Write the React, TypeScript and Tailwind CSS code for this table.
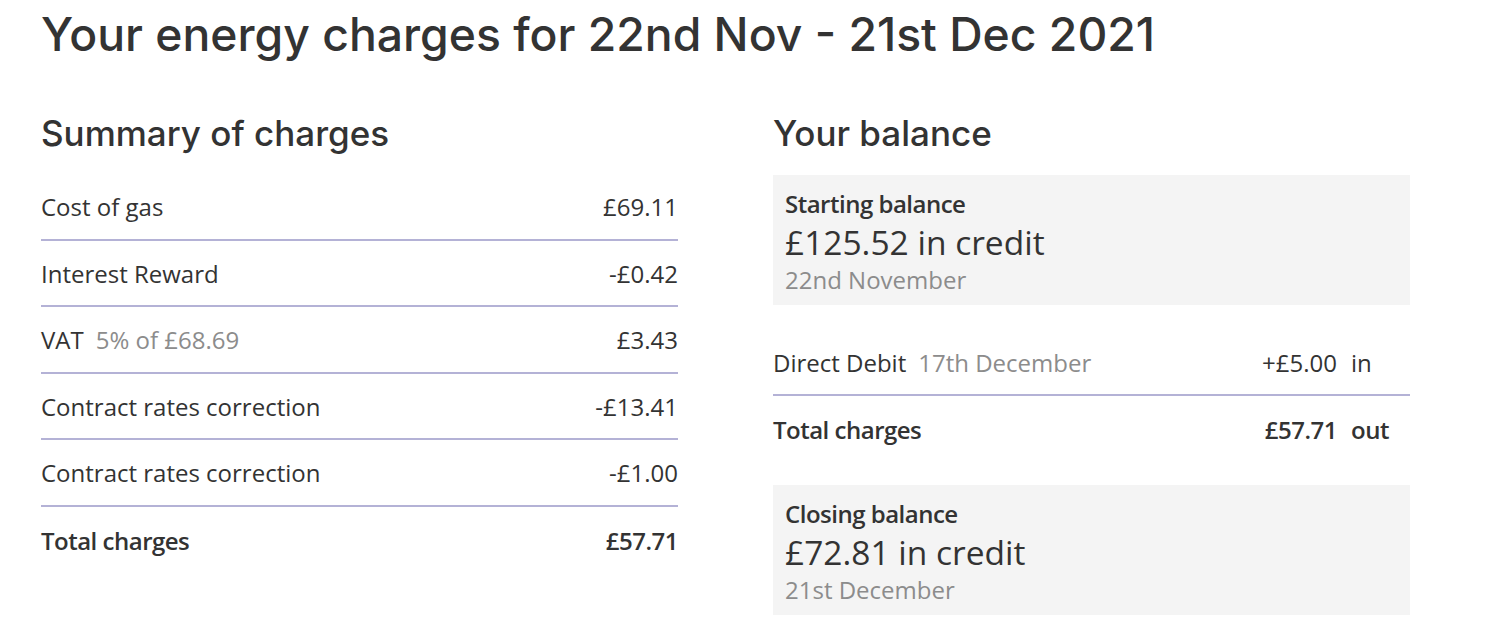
const heading = { fontFamily: 'Inter, "Noto Sans", sans-serif' };

interface Charge {
  label: string;
  note?: string;
  amount: string;
}

const charges: Charge[] = [
  { label: 'Cost of gas', amount: '£69.11' },
  { label: 'Interest Reward', amount: '-£0.42' },
  { label: 'VAT', note: '5% of £68.69', amount: '£3.43' },
  { label: 'Contract rates correction', amount: '-£13.41' },
  { label: 'Contract rates correction', amount: '-£1.00' },
];

function BalanceBox({ title, amount, date }: { title: string; amount: string; date: string }) {
  return (
    <div className="bg-[#f4f4f4] px-3 pt-[13px] pb-[9px]">
      <div className="text-[24px] font-semibold leading-[32px] tracking-[-0.5px]">{title}</div>
      <div className="text-[33.5px] leading-[44px]">{amount}</div>
      <div className="text-[24px] leading-[32px] text-[#8c8c8c]">{date}</div>
    </div>
  );
}

export default function App() {
  return (
    <div
      className="min-h-screen bg-white pl-[41px] pt-[10px] text-[#333333]"
      style={{ fontFamily: '"Open Sans", sans-serif' }}
    >
      <h1 className="text-[46.3px] leading-[48px] font-medium" style={heading}>
        Your energy charges for 22nd Nov - 21st Dec 2021
      </h1>

      <div className="flex gap-[95px] mt-[55px]">
        {/* Summary of charges */}
        <div className="w-[637px]">
          <h2 className="text-[35px] leading-[40px] font-medium" style={heading}>
            Summary of charges
          </h2>
          <div className="mt-[21px]">
            {charges.map((c, i) => (
              <div
                key={i}
                className="flex justify-between items-center h-[66.5px] border-b-2 border-[#b4b2d6] text-[24px] pt-[2px]"
              >
                <span>
                  {c.label}
                  {c.note && <span className="ml-3 text-[#8c8c8c]">{c.note}</span>}
                </span>
                <span>{c.amount}</span>
              </div>
            ))}
            <div className="flex justify-between items-center h-[68px] text-[24px] font-semibold tracking-[-0.5px]">
              <span>Total charges</span>
              <span>£57.71</span>
            </div>
          </div>
        </div>

        {/* Your balance */}
        <div className="w-[637px]">
          <h2 className="text-[35px] leading-[40px] font-medium" style={heading}>
            Your balance
          </h2>
          <div className="mt-[22px]">
            <BalanceBox title="Starting balance" amount="£125.52 in credit" date="22nd November" />
            <div className="mt-[24px] flex items-center h-[67px] border-b-2 border-[#b4b2d6] text-[24px] pt-[2px]">
              <span className="flex-1">
                Direct Debit<span className="ml-3 text-[#8c8c8c]">17th December</span>
              </span>
              <span className="text-right">+£5.00</span>
              <span className="w-[73px] pl-[14px]">in</span>
            </div>
            <div className="flex items-center h-[68px] text-[24px] font-semibold tracking-[-0.5px]">
              <span className="flex-1">Total charges</span>
              <span className="text-right">£57.71</span>
              <span className="w-[73px] pl-[14px]">out</span>
            </div>
            <div className="mt-[21px]">
              <BalanceBox title="Closing balance" amount="£72.81 in credit" date="21st December" />
            </div>
          </div>
        </div>
      </div>
    </div>
  );
}
